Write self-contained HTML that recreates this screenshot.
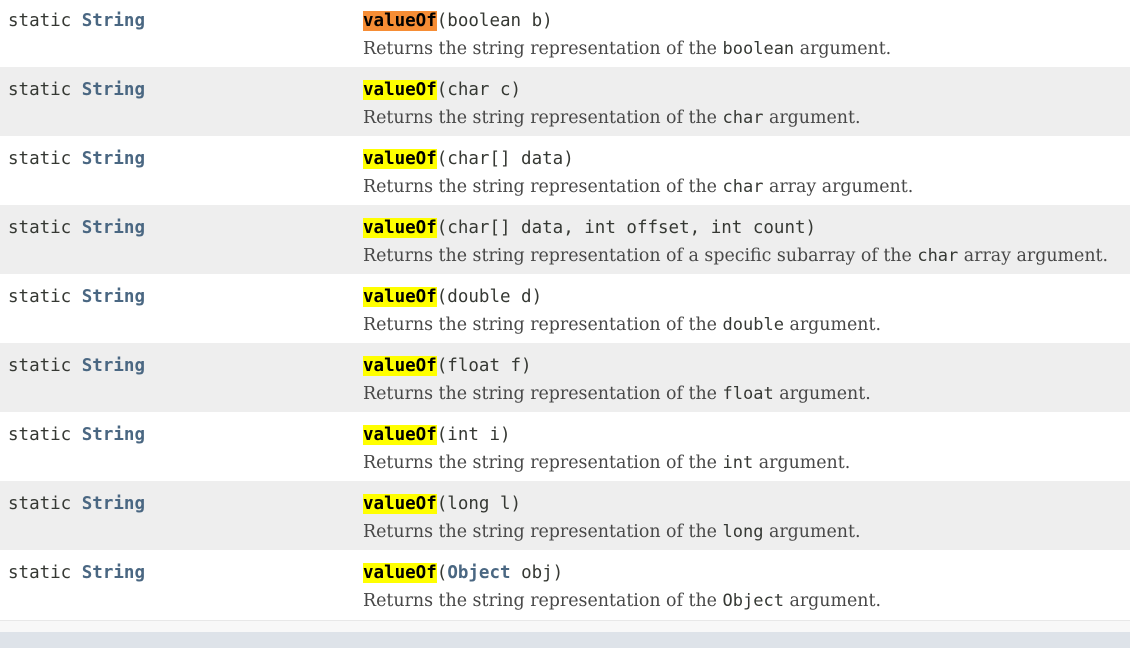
<!DOCTYPE html>
<html><head><style>
body{margin:0;width:1130px;height:648px;overflow:hidden;background:#fff;position:relative}
.row{position:absolute;left:0;width:1130px;height:69px}
.g{background:#eee}
.m{font-family:"DejaVu Sans Mono","Liberation Mono",monospace;font-size:17.5px;color:#353833;position:absolute;white-space:pre;line-height:22px}
.c1{left:8px;top:12px}
.c2{left:363px;top:12px}
.d{position:absolute;left:363px;top:40px;font-family:"DejaVu Serif",serif;font-size:17.4px;color:#474747;white-space:pre;line-height:22px}
.d code{font-family:"DejaVu Sans Mono",monospace;font-size:17px;color:#353833}
.t{color:#4a6782;font-weight:bold}
.h{background:#ff0;font-weight:bold;color:#000}
.o{background:#f68d35;font-weight:bold;color:#000}
</style></head><body>
<div class="row" style="top:-2px"><div class="m c1">static <span class="t">String</span></div><div class="m c2"><span class="o">valueOf</span>(boolean b)</div><div class="d">Returns the string representation of the <code>boolean</code> argument.</div></div>
<div class="row g" style="top:67px"><div class="m c1">static <span class="t">String</span></div><div class="m c2"><span class="h">valueOf</span>(char c)</div><div class="d">Returns the string representation of the <code>char</code> argument.</div></div>
<div class="row" style="top:136px"><div class="m c1">static <span class="t">String</span></div><div class="m c2"><span class="h">valueOf</span>(char[] data)</div><div class="d">Returns the string representation of the <code>char</code> array argument.</div></div>
<div class="row g" style="top:205px"><div class="m c1">static <span class="t">String</span></div><div class="m c2"><span class="h">valueOf</span>(char[] data, int offset, int count)</div><div class="d">Returns the string representation of a specific subarray of the <code>char</code> array argument.</div></div>
<div class="row" style="top:274px"><div class="m c1">static <span class="t">String</span></div><div class="m c2"><span class="h">valueOf</span>(double d)</div><div class="d">Returns the string representation of the <code>double</code> argument.</div></div>
<div class="row g" style="top:343px"><div class="m c1">static <span class="t">String</span></div><div class="m c2"><span class="h">valueOf</span>(float f)</div><div class="d">Returns the string representation of the <code>float</code> argument.</div></div>
<div class="row" style="top:412px"><div class="m c1">static <span class="t">String</span></div><div class="m c2"><span class="h">valueOf</span>(int i)</div><div class="d">Returns the string representation of the <code>int</code> argument.</div></div>
<div class="row g" style="top:481px"><div class="m c1">static <span class="t">String</span></div><div class="m c2"><span class="h">valueOf</span>(long l)</div><div class="d">Returns the string representation of the <code>long</code> argument.</div></div>
<div class="row" style="top:550px"><div class="m c1">static <span class="t">String</span></div><div class="m c2"><span class="h">valueOf</span>(<span class="t">Object</span> obj)</div><div class="d">Returns the string representation of the <code>Object</code> argument.</div></div>
<div style="position:absolute;top:620px;left:0;width:1130px;height:12px;background:#f8f8f8;border-top:1px solid #e8e8e8;box-sizing:border-box"></div>
<div style="position:absolute;top:632px;left:0;width:1130px;height:16px;background:#dee3e9"></div>
</body></html>
